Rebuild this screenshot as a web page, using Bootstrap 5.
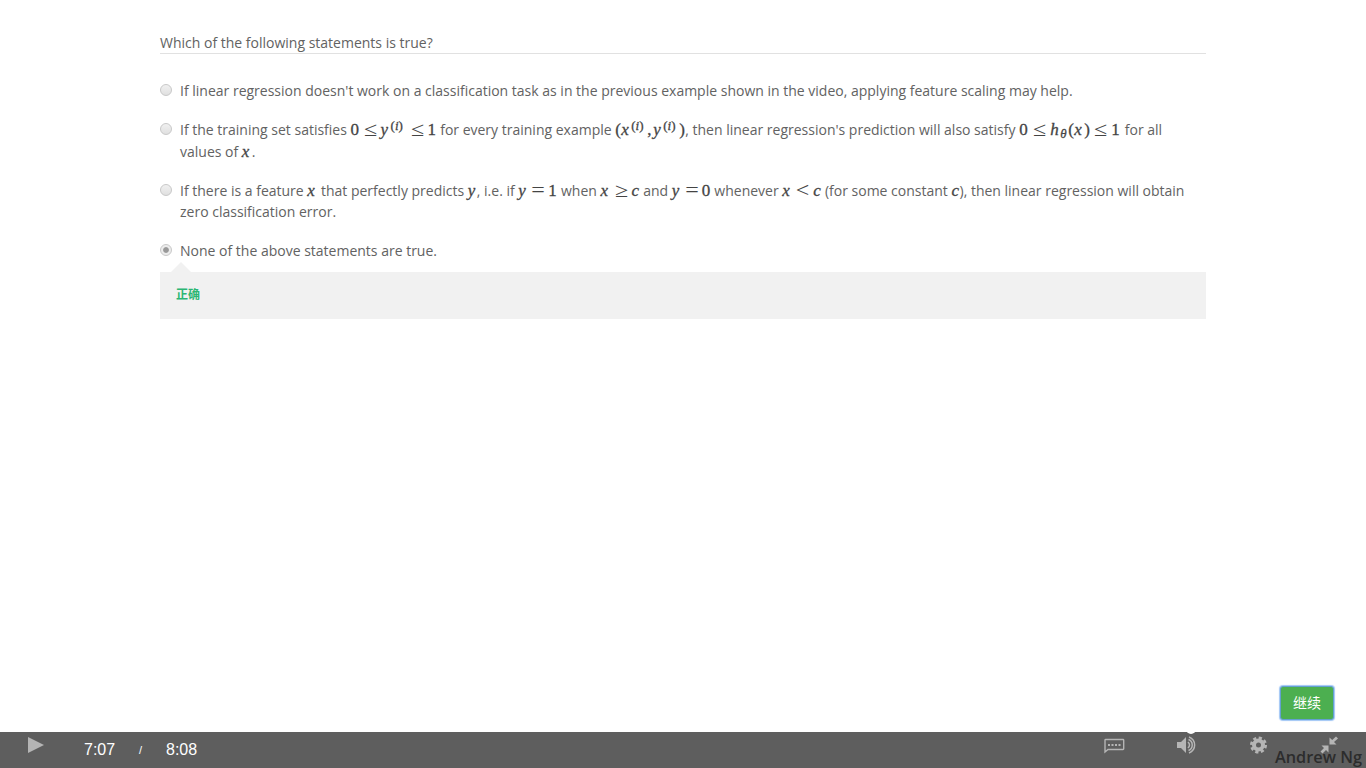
<!DOCTYPE html>
<html lang="en">
<head>
<meta charset="utf-8">
<title>Quiz</title>
<link rel="stylesheet" href="https://cdn.jsdelivr.net/npm/bootstrap@5.3.0/dist/css/bootstrap.min.css">
<script src="https://cdn.jsdelivr.net/npm/bootstrap@5.3.0/dist/js/bootstrap.bundle.min.js"></script>
<style>
body{height:768px;font:14px/21px "Open Sans","Noto Sans CJK SC",sans-serif;color:#626262;background:#fff;overflow:hidden}
.quiz{width:1046px;margin-left:160px;padding-top:32px}
.question{height:22px;border-bottom:1px solid #e1e1e1}
.answer{padding-left:20px;position:relative;margin-bottom:18px}
.answer:first-child{margin-top:22px}
.answer input{appearance:none;position:absolute;left:0;top:4px;width:12px;height:12px;margin:0;border:1px solid #c8c8c8;border-radius:50%;background:linear-gradient(#f0f0f0,#e0e0e0)}
.answer input:checked{background:radial-gradient(circle,#999 0 2.4px,#ececec 3.3px)}
.ln{white-space:nowrap;height:21px}
.tall{height:22px}
.mx{display:inline-flex;align-items:baseline;font:17px/18px "Liberation Serif",serif;color:#444;-webkit-text-stroke:.3px #444;height:18px}
.mx>*{width:10px;flex:none}
.mx .n{width:9px}
.mx .c{width:8px}
.mx .p{width:6px}
.mx .r,.mx .e{width:21px;text-align:center;font:20px/18px "Liberation Serif",serif;-webkit-text-stroke:0;transform:translateY(1px) scaleX(1.2)}
.mx .e{width:20px}
.mx sup{font-size:13px;width:16px;top:-5px;line-height:1}
.mx sub{font-size:13px;width:8px;bottom:-3px;line-height:1}
.feedback{position:relative;height:47px;margin-top:-8px;padding:12px 16px;background:#f1f1f1;color:#2bb673;font-size:12px;font-weight:700}
.feedback::before{content:"";position:absolute;left:11px;top:-10px;border:solid transparent;border-width:0 10px 10px;border-bottom-color:#f1f1f1}
.go{width:54px;height:34px;margin:0 32px 12px auto;padding:0;background:#4caf50!important;border:1px solid #64a0d0!important;border-radius:3px;color:#fff!important;font-size:14px;line-height:30px;box-shadow:0 0 1px 1px #a0c6f5}
.player{position:relative;height:36px;background:#5e5e5e;color:#fff;font:16px/20px "Liberation Sans",sans-serif}
.player>*{position:absolute}
.icons{left:0;top:0}
.t1{left:84px;top:8px}.t2{left:139px;top:8px;font-size:11px}.t3{left:166px;top:8px}
.credit{left:1275px;top:15px;font:600 16.3px/20px "Open Sans",sans-serif;color:#2c2c2c;white-space:nowrap}
</style>
</head>
<body class="d-flex flex-column">
<main class="quiz">
<div class="question">Which of the following statements is true?</div>
<form class="pt-1">
<div class="answer"><input type="radio" name="a" aria-label="1"><div class="ln">If linear regression doesn't work on a classification task as in the previous example shown in the video, applying feature scaling may help.</div></div>
<div class="answer"><input type="radio" name="a" aria-label="2">
<div class="ln tall">If the training set satisfies <span class="mx"><span class="n">0</span><span class="r">≤</span><i>y</i><sup>(<i>i</i>)</sup><span class="r">≤</span><span class="n">1</span></span> for every training example <span class="mx"><span class="p">(</span><i>x</i><sup>(<i>i</i>)</sup><span class="p">,</span><i>y</i><sup>(<i>i</i>)</sup><span class="p">)</span></span>, then linear regression's prediction will also satisfy <span class="mx"><span>0</span><span class="r">≤</span><i>h</i><sub><i>θ</i></sub><span class="p">(</span><i>x</i><span class="p">)</span><span class="r">≤</span><span>1</span></span> for all</div>
<div class="ln">values of <span class="mx"><i>x</i></span>.</div></div>
<div class="answer"><input type="radio" name="a" aria-label="3">
<div class="ln">If there is a feature <span class="mx"><i>x</i></span> that perfectly predicts <span class="mx"><i class="n">y</i></span>, i.e. if <span class="mx"><i>y</i><span class="e">=</span><span class="n">1</span></span> when <span class="mx"><i>x</i><span class="r">≥</span><i class="c">c</i></span> and <span class="mx"><i>y</i><span class="e">=</span><span class="n">0</span></span> whenever <span class="mx"><i>x</i><span class="r">&lt;</span><i class="c">c</i></span> (for some constant <span class="mx"><i class="c">c</i></span>), then linear regression will obtain</div>
<div class="ln">zero classification error.</div></div>
<div class="answer"><input type="radio" name="a" aria-label="4" checked><div class="ln tall">None of the above statements are true.</div></div>
</form>
<div class="feedback">正确</div>
</main>
<button class="btn go mt-auto" type="button">继续</button>
<footer class="player flex-shrink-0">
<svg class="icons" width="1366" height="36" fill="#b5b5b5">
<path d="M28 5l16 8-16 8z"/>
<path d="M1106 7.500h17q.7 0 .7.700v8.600q0 .7-.7.7h-15l-3 2.500V8.200q0-.7.7-.7z" fill="none" stroke="#b5b5b5" stroke-width="1.400"/>
<path d="M1108 12h2v2h-2zM1111.500 12h2v2h-2zM1115 12h2v2h-2zM1118.500 12h2v2h-2z"/>
<path d="M1177 10h4l5-5v16l-5-5h-4z"/>
<path d="M1188 10q3 3 0 6M1188.500 7.500c5 2 5 9 0 11M1189 5c7.500 3 7.500 13 0 16" fill="none" stroke="#b5b5b5" stroke-width="1.500"/>
<circle cx="1191" cy="-3" r="5" fill="#fff"/>
<circle cx="1258.500" cy="13" r="4.500" fill="none" stroke="#b5b5b5" stroke-width="4"/>
<circle cx="1258.500" cy="13" r="7.200" fill="none" stroke="#b5b5b5" stroke-width="2.600" stroke-dasharray="3.200 2.455"/>
<path d="M1329.500 5.500v7h7l-2.500-2.500L1338 6.500l-2-2-3.800 3.500zM1328.500 13.500h-7l2.500 2.500-3.500 3.500 2 2 3.500-3.500 2.500 2.500z"/>
</svg>
<span class="t1">7:07</span><span class="t2">/</span><span class="t3">8:08</span>
<span class="credit">Andrew Ng</span>
</footer>
</body>
</html>
